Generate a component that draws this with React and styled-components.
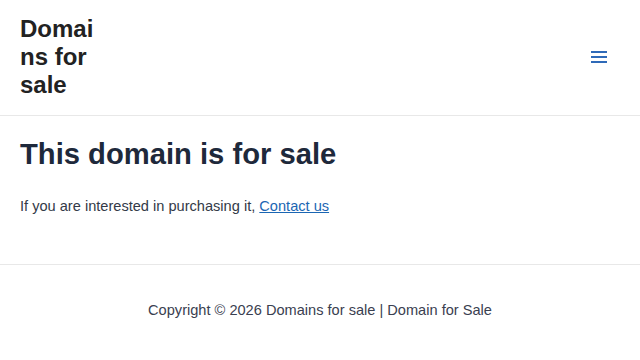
import styled, { createGlobalStyle } from 'styled-components'

const GlobalStyle = createGlobalStyle`
  body {
    margin: 0;
    background: #ffffff;
    font-family: "Liberation Sans", Arial, sans-serif;
  }
`

const Header = styled.header`
  display: flex;
  align-items: center;
  justify-content: space-between;
  padding: 15px 20px 16px;
  border-bottom: 1px solid #e8e8e8;
`

const SiteTitle = styled.div`
  width: 80px;
  font-size: 24px;
  font-weight: 700;
  line-height: 28px;
  color: #222222;
  overflow-wrap: anywhere;
`

const MenuButton = styled.button`
  display: flex;
  align-items: center;
  justify-content: center;
  width: 24px;
  height: 24px;
  padding: 0;
  margin-right: 9px;
  border: none;
  background: none;
  color: #2f6ab8;
`

const Main = styled.main`
  padding: 20px 20px 46px;
  border-bottom: 1px solid #e8e8e8;
`

const Heading = styled.h1`
  margin: 0 0 22px;
  font-size: 29.2px;
  line-height: 36px;
  font-weight: 700;
  color: #1e293b;
`

const Text = styled.p`
  margin: 0;
  font-size: 14.6px;
  line-height: 24px;
  color: #333a48;
`

const Link = styled.a`
  color: #1b66b3;
  text-decoration: underline;
`

const Footer = styled.footer`
  padding: 33px 20px 40px;
  text-align: center;
  font-size: 14.6px;
  line-height: 24px;
  color: #3a4050;
`

const App = () => {
  return (
    <>
      <GlobalStyle />
      <Header>
        <SiteTitle>Domains for sale</SiteTitle>
        <MenuButton aria-label="Menu">
          <svg width="18" height="14" viewBox="0 0 18 14" fill="currentColor">
            <rect x="1" y="1" width="16" height="2" />
            <rect x="1" y="6" width="16" height="2" />
            <rect x="1" y="11" width="16" height="2" />
          </svg>
        </MenuButton>
      </Header>
      <Main>
        <Heading>This domain is for sale</Heading>
        <Text>
          If you are interested in purchasing it, <Link href="#">Contact us</Link>
        </Text>
      </Main>
      <Footer>Copyright © 2026 Domains for sale | Domain for Sale</Footer>
    </>
  )
}

export default App
